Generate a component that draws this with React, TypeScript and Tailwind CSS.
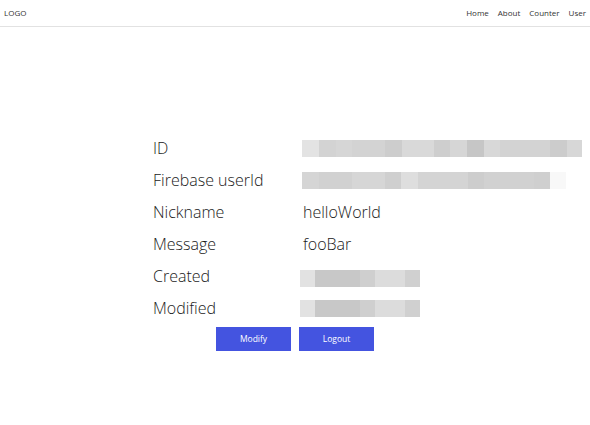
import * as React from 'react';

type Block = { w: string; c: string };

// pixelated placeholders for the masked values
const idBar: Block[] = [
  { w: 'w-[17px]', c: 'bg-[#e3e3e3]' },
  { w: 'w-[17px]', c: 'bg-[#d3d3d3]' },
  { w: 'w-[16px]', c: 'bg-[#d6d6d6]' },
  { w: 'w-[33px]', c: 'bg-[#d3d3d3]' },
  { w: 'w-[17px]', c: 'bg-[#cdcdcd]' },
  { w: 'w-[32px]', c: 'bg-[#d9d9d9]' },
  { w: 'w-[16px]', c: 'bg-[#cecece]' },
  { w: 'w-[17px]', c: 'bg-[#d6d6d6]' },
  { w: 'w-[17px]', c: 'bg-[#c6c6c6]' },
  { w: 'w-[16px]', c: 'bg-[#d8d8d8]' },
  { w: 'w-[50px]', c: 'bg-[#d3d3d3]' },
  { w: 'w-[17px]', c: 'bg-[#cccccc]' },
  { w: 'w-[15px]', c: 'bg-[#d7d7d7]' },
];

const uidBar: Block[] = [
  { w: 'w-[17px]', c: 'bg-[#d5d5d5]' },
  { w: 'w-[33px]', c: 'bg-[#d1d1d1]' },
  { w: 'w-[33px]', c: 'bg-[#d6d6d6]' },
  { w: 'w-[16px]', c: 'bg-[#cfcfcf]' },
  { w: 'w-[17px]', c: 'bg-[#dedede]' },
  { w: 'w-[50px]', c: 'bg-[#d4d4d4]' },
  { w: 'w-[16px]', c: 'bg-[#cdcdcd]' },
  { w: 'w-[50px]', c: 'bg-[#d1d1d1]' },
  { w: 'w-[16px]', c: 'bg-[#cfcfcf]' },
  { w: 'w-[16px]', c: 'bg-[#f8f8f8]' },
];

const dateBar: Block[] = [
  { w: 'w-[15px]', c: 'bg-[#e2e2e2]' },
  { w: 'w-[45px]', c: 'bg-[#c8c8c8]' },
  { w: 'w-[15px]', c: 'bg-[#cfcfcf]' },
  { w: 'w-[30px]', c: 'bg-[#dcdcdc]' },
  { w: 'w-[15px]', c: 'bg-[#d0d0d0]' },
];

function Pixels({ blocks, className = '' }: { blocks: Block[]; className?: string }) {
  return (
    <div className={`flex h-[17px] ${className}`}>
      {blocks.map((b, i) => (
        <div key={i} className={`${b.w} ${b.c} h-full`} />
      ))}
    </div>
  );
}

function Row({ label, children }: { label: string; children: React.ReactNode }) {
  return (
    <div className="flex items-center h-[32px]">
      <div className="w-[150px] shrink-0">{label}</div>
      <div className="flex-1 flex items-center">{children}</div>
    </div>
  );
}

export default function App() {
  return (
    <div className="w-[590px] h-[425px] bg-white text-[#1a1a1a] font-['Open_Sans',sans-serif]">
      <header className="h-[27px] flex items-center justify-between px-[4px] border-b border-[#e2e2e2] text-[8px] text-[#333]">
        <span>LOGO</span>
        <nav className="flex gap-[9px] pr-[0px]">
          <a>Home</a>
          <a>About</a>
          <a>Counter</a>
          <a>User</a>
        </nav>
      </header>

      <main className="pt-[105px]">
        <div className="pl-[153px] text-[16px] font-light">
          <Row label="ID">
            <Pixels blocks={idBar} className="-ml-[1px]" />
          </Row>
          <Row label="Firebase userId">
            <Pixels blocks={uidBar} className="-ml-[1px]" />
          </Row>
          <Row label="Nickname">helloWorld</Row>
          <Row label="Message">fooBar</Row>
          <Row label="Created">
            <Pixels blocks={dateBar} className="-ml-[3px] mt-[4px]" />
          </Row>
          <Row label="Modified">
            <Pixels blocks={dateBar} className="-ml-[3px]" />
          </Row>
        </div>
        <div className="flex justify-center gap-[8px] mt-[3px]">
          <button className="w-[75px] h-[24px] bg-[#4454e0] text-white text-[8.5px]">Modify</button>
          <button className="w-[75px] h-[24px] bg-[#4454e0] text-white text-[8.5px]">Logout</button>
        </div>
      </main>
    </div>
  );
}
